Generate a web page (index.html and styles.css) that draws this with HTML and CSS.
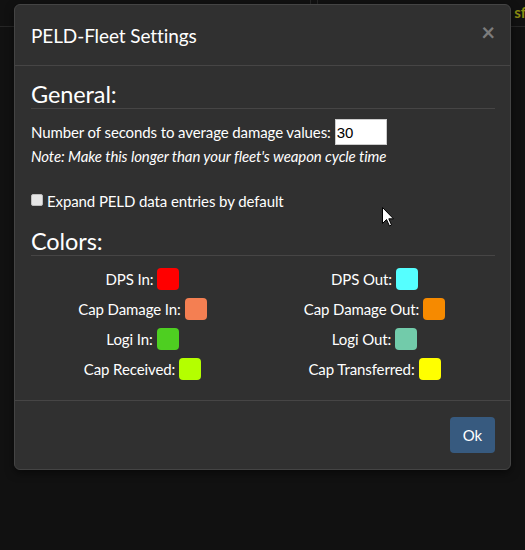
FILE: index.html
```html
<!DOCTYPE html>
<html>
<head>
<meta charset="utf-8">
<link rel="stylesheet" href="styles.css">
</head>
<body>
<div class="page">
  <div class="topbar">
    <div class="pane-a"></div>
    <div class="pane-b"><span class="cut">sf</span></div>
  </div>
</div>

<div class="modal">
  <div class="modal-header">
    <h4 class="modal-title">PELD-Fleet Settings</h4>
    <span class="close">&times;</span>
  </div>
  <div class="modal-body">
    <div class="legend">General:</div>
    <div class="field-row">
      <label class="field-label">Number of seconds to average damage values:</label>
      <input class="num-input" type="text" value="30">
    </div>
    <div class="note">Note: Make this longer than your fleet's weapon cycle time</div>
    <div class="check-row">
      <span class="checkbox"></span>
      <span>Expand PELD data entries by default</span>
    </div>
    <div class="legend legend-colors">Colors:</div>
    <div class="color-grid">
      <div class="color-item">DPS In: <span class="swatch" style="background:#ff0000"></span></div>
      <div class="color-item">DPS Out: <span class="swatch" style="background:#55ffff"></span></div>
      <div class="color-item">Cap Damage In: <span class="swatch" style="background:#f47f52"></span></div>
      <div class="color-item">Cap Damage Out: <span class="swatch" style="background:#f68a00"></span></div>
      <div class="color-item">Logi In: <span class="swatch" style="background:#4ecf21"></span></div>
      <div class="color-item">Logi Out: <span class="swatch" style="background:#72cbaa"></span></div>
      <div class="color-item">Cap Received: <span class="swatch" style="background:#b4ff00"></span></div>
      <div class="color-item">Cap Transferred: <span class="swatch" style="background:#ffff00"></span></div>
    </div>
  </div>
  <div class="modal-footer">
    <button class="btn-ok">Ok</button>
  </div>
</div>

<svg class="cursor" width="13" height="20" viewBox="0 0 13 20">
  <path d="M0.5 0.5 L0.5 16.5 L4.5 12.5 L7.5 19 L9.5 18 L6.8 11.8 L11.5 11.8 Z" fill="#fff" stroke="#000" stroke-width="1"/>
</svg>
</body>
</html>
```
FILE: styles.css
```css
html, body {
  margin: 0;
  padding: 0;
}
body {
  width: 525px;
  height: 550px;
  overflow: hidden;
  background: #111111;
  font-family: Lato, "Open Sans", sans-serif;
  font-size: 15px;
  letter-spacing: -0.1px;
  color: #ffffff;
  position: relative;
}
.page {
  width: 525px;
  height: 550px;
}
.topbar {
  display: flex;
  height: 26px;
  border-bottom: 1px solid #262626;
}
.pane-a {
  width: 310px;
  border-right: 1px solid #262626;
}
.pane-b {
  flex: 1;
  margin-left: 6px;
  border-left: 1px solid #262626;
  display: flex;
  justify-content: flex-end;
  overflow: hidden;
}
.cut {
  font-weight: bold;
  color: #8c8c12;
  font-size: 15px;
  line-height: 24px;
  margin-right: -1px;
}
.modal {
  position: absolute;
  left: 14px;
  top: 4px;
  width: 495px;
  background: #303030;
  border: 1px solid #444444;
  border-radius: 6px;
  box-shadow: 0 3px 9px rgba(0,0,0,0.5);
}
.modal-header {
  display: flex;
  align-items: center;
  justify-content: space-between;
  height: 60px;
  padding: 0 15px 0 16px;
  border-bottom: 1px solid #464545;
}
.modal-title {
  margin: 0;
  font-size: 19px;
  font-weight: normal;
  line-height: 24px;
  padding-top: 1px;
}
.close {
  font-size: 24px;
  font-weight: bold;
  color: #7c7c7c;
  line-height: 20px;
  margin-top: -6px;
  margin-right: 0;
}
.modal-body {
  padding: 14px 15px 20px 16px;
}
.legend {
  font-size: 23.5px;
  line-height: 28px;
  border-bottom: 1px solid #464545;
  margin-bottom: 10px;
}
.field-row {
  display: flex;
  align-items: center;
  height: 26px;
}
.field-label {
  margin-right: 4px;
}
.num-input {
  width: 52px;
  height: 26px;
  box-sizing: border-box;
  border: 1px solid #cccccc;
  background: #ffffff;
  color: #000000;
  font-family: "Liberation Sans", Arial, sans-serif;
  font-size: 15px;
  letter-spacing: 0;
  padding: 0 1px;
  margin: 0;
}
.note {
  font-style: italic;
  line-height: 21px;
  margin-top: 1px;
}
.check-row {
  display: flex;
  align-items: center;
  gap: 4px;
  margin-top: 24px;
  line-height: 21px;
}
.checkbox {
  width: 10px;
  height: 10px;
  background: #e6e6e6;
  border: 1px solid #bdbdbd;
  border-radius: 2px;
  margin-top: -3px;
}
.legend-colors {
  margin-top: 15px;
  margin-bottom: 12px;
}
.color-grid {
  display: grid;
  grid-template-columns: 1fr 1fr;
  row-gap: 8px;
}
.color-item {
  display: flex;
  align-items: center;
  justify-content: center;
  gap: 4px;
  height: 22px;
  line-height: 22px;
}
.swatch {
  display: inline-block;
  width: 22px;
  height: 22px;
  border-radius: 4px;
  margin-right: 9px;
}
.modal-footer {
  display: flex;
  justify-content: flex-end;
  padding: 16px 15px 16px;
  border-top: 1px solid #464545;
}
.btn-ok {
  height: 36px;
  width: 45px;
  padding: 0;
  background: #375a7f;
  color: #ffffff;
  border: none;
  border-radius: 4px;
  font-family: Lato, sans-serif;
  font-size: 15px;
}
.cursor {
  position: absolute;
  left: 382px;
  top: 207px;
}
```
